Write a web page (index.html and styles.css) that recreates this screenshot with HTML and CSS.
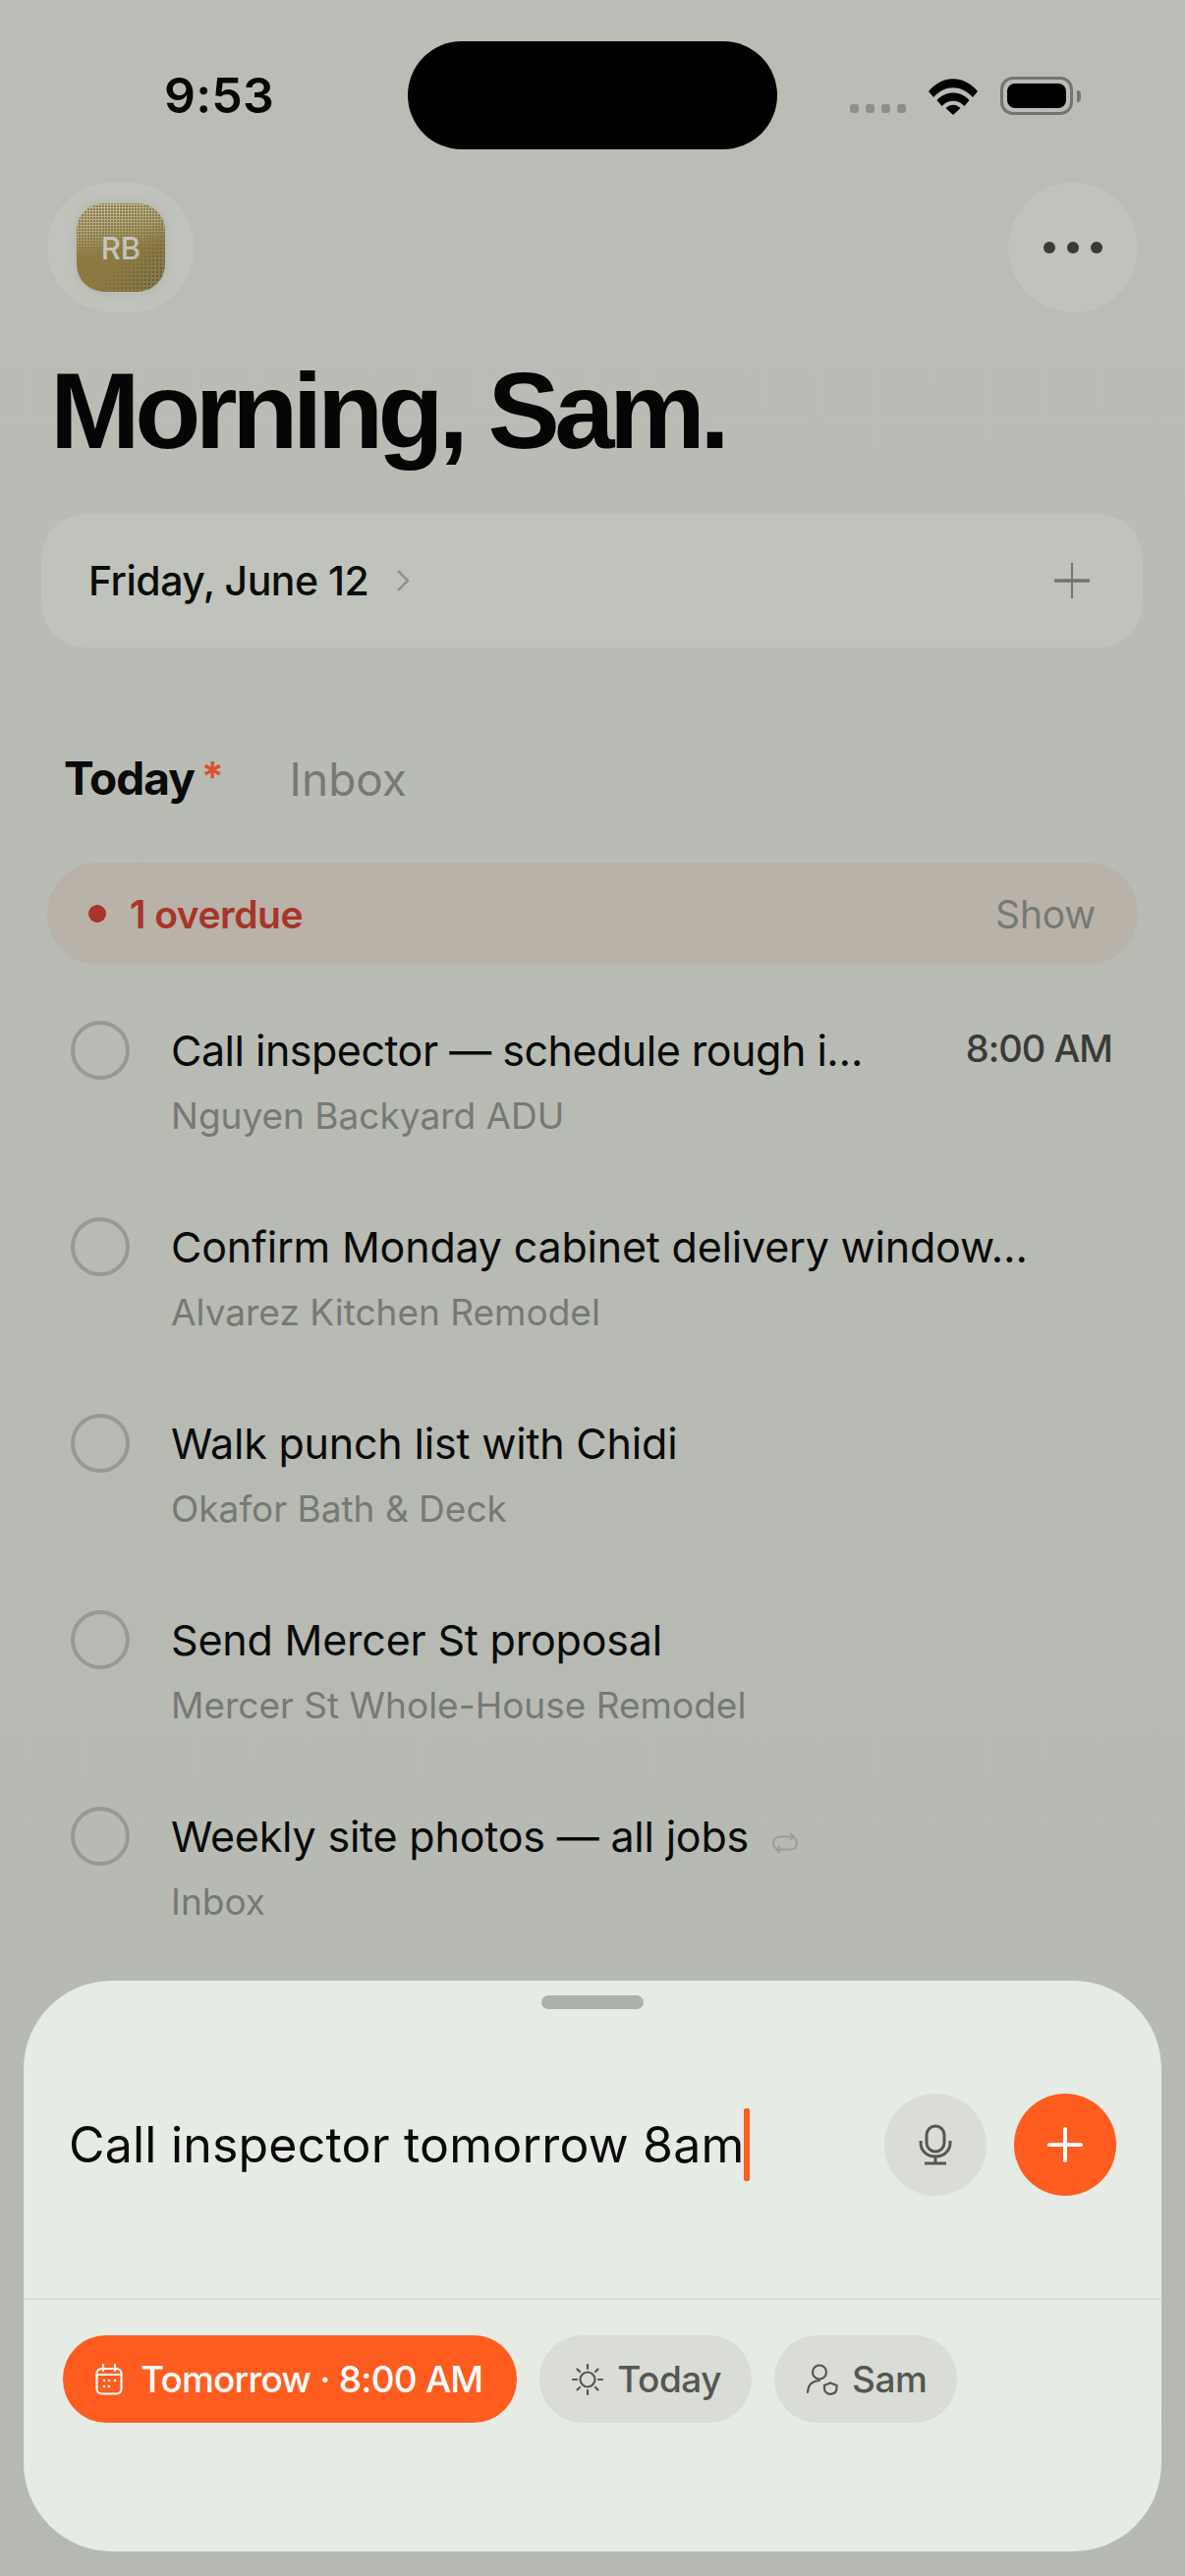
FILE: index.html
```html
<!DOCTYPE html>
<html lang="en">

<head>
    <meta charset="UTF-8">
    <title>Morning, Sam.</title>
    <link rel="stylesheet" href="styles.css">
</head>

<body>

    <header class="status">
        <span class="time">9:53</span>
        <div class="island"></div>
        <div class="status_icons">
            <div class="signal"><i></i><i></i><i></i><i></i></div>
            <svg class="wifi" viewBox="0 0 52 38" width="52" height="38">
                <path d="M1 14 C15 -3 37 -3 51 14 L46 20 C34 7 18 7 6 20 Z" />
                <path d="M9.500 23 C18 13 34 13 42.500 23 L37.500 29 C31 22 21 22 14.500 29 Z" />
                <path d="M18.500 31 C23 26.500 29 26.500 33.500 31 L26 38 Z" />
            </svg>
            <div class="battery"><div class="battery_fill"></div></div>
            <div class="battery_nub"></div>
        </div>
    </header>

    <section class="top">
        <div class="avatar_wrap">
            <div class="avatar"><span>RB</span></div>
        </div>
        <button class="more"><i></i><i></i><i></i></button>
    </section>

    <h1>Morning, Sam.</h1>

    <section class="date_card">
        <span class="date">Friday, June 12</span>
        <svg class="chevron" viewBox="0 0 14 24" width="14" height="24">
            <path d="M2 2 L12 12 L2 22" />
        </svg>
        <svg class="date_plus" viewBox="0 0 38 38" width="38" height="38">
            <path d="M19 1 V37" />
            <path class="thick" d="M1 19 H37" />
        </svg>
    </section>

    <nav class="tabs">
        <button class="tab valgt">Today<span class="star">*</span></button>
        <button class="tab">Inbox</button>
    </nav>

    <section class="overdue">
        <span class="dot"></span>
        <span class="overdue_text">1 overdue</span>
        <span class="show">Show</span>
    </section>

    <section class="liste">
        <article class="row">
            <span class="check"></span>
            <div class="info">
                <h2 class="tight">Call inspector — schedule rough i…</h2>
                <p>Nguyen Backyard ADU</p>
            </div>
            <span class="due">8:00 AM</span>
        </article>
        <article class="row">
            <span class="check"></span>
            <div class="info">
                <h2>Confirm Monday cabinet delivery window…</h2>
                <p>Alvarez Kitchen Remodel</p>
            </div>
        </article>
        <article class="row">
            <span class="check"></span>
            <div class="info">
                <h2>Walk punch list with Chidi</h2>
                <p>Okafor Bath &amp; Deck</p>
            </div>
        </article>
        <article class="row">
            <span class="check"></span>
            <div class="info">
                <h2>Send Mercer St proposal</h2>
                <p>Mercer St Whole-House Remodel</p>
            </div>
        </article>
        <article class="row">
            <span class="check"></span>
            <div class="info">
                <h2>Weekly site photos — all jobs
                    <svg class="repeat" viewBox="0 0 28 24" width="28" height="24">
                        <path d="M19 2 L23 5.500 L19 9" />
                        <path d="M22 5.500 H9 C4 5.500 2 8.500 2 12 C2 14 3 16 4.500 17" />
                        <path d="M9 22 L5 18.500 L9 15" />
                        <path d="M6 18.500 H19 C24 18.500 26 15.500 26 12 C26 10 25 8 23.500 7" />
                    </svg>
                </h2>
                <p>Inbox</p>
            </div>
        </article>
    </section>

    <section class="sheet">
        <div class="handle"></div>
        <div class="input_row">
            <div class="input_text">Call inspector tomorrow 8am<span class="cursor"></span></div>
            <button class="round mic">
                <svg viewBox="0 0 34 42" width="34" height="42">
                    <rect x="8" y="2" width="18" height="26" rx="9" />
                    <path d="M2 17 V19 C2 28 9 33 17 33 C25 33 32 28 32 19 V17" />
                    <path d="M17 33 V39" />
                    <path d="M6 40 H28" />
                </svg>
            </button>
            <button class="round add">
                <svg viewBox="0 0 36 36" width="36" height="36">
                    <path d="M18 2 V34" />
                    <path d="M2 18 H34" />
                </svg>
            </button>
        </div>
        <div class="chips">
            <button class="chip active">
                <svg viewBox="0 0 28 32" width="28" height="32">
                    <rect x="1.500" y="5" width="25" height="25.500" rx="5" />
                    <path d="M1.500 11 H26.500" />
                    <path d="M8 1 V7" />
                    <path d="M20 1 V7" />
                    <circle class="fill" cx="9" cy="17" r="1.300" />
                    <circle class="fill" cx="14" cy="17" r="1.300" />
                    <circle class="fill" cx="20" cy="17" r="1.300" />
                    <circle class="fill" cx="9" cy="23" r="1.300" />
                    <circle class="fill" cx="14" cy="23" r="1.300" />
                </svg>
                Tomorrow · 8:00 AM
            </button>
            <button class="chip">
                <svg viewBox="0 0 32 32" width="32" height="32">
                    <circle cx="16" cy="16" r="7.500" />
                    <path d="M16 1 V5" />
                    <path d="M16 27 V31" />
                    <path d="M1 16 H5" />
                    <path d="M27 16 H31" />
                    <path d="M5.500 5.500 L8 8" />
                    <path d="M24 24 L26.500 26.500" />
                    <path d="M5.500 26.500 L8 24" />
                    <path d="M24 8 L26.500 5.500" />
                </svg>
                Today
            </button>
            <button class="chip">
                <svg viewBox="0 0 32 32" width="32" height="32">
                    <circle cx="13" cy="8.500" r="7" />
                    <path d="M1 29 C1 22 5 17.500 13 17" />
                    <path d="M18 22 L24 19.500 L30.500 22 V25 C30.500 28 28 30.500 24 31 C20.500 30.500 18 28 18 25 Z" />
                </svg>
                Sam
            </button>
        </div>
    </section>

</body>

</html>
```

FILE: styles.css
```css
* {
    box-sizing: border-box;
}

html,
body {
    margin: 0;
    padding: 0;
}

body {
    width: 1206px;
    height: 2622px;
    overflow: hidden;
    background: linear-gradient(#babcb6, #b6b8b2);
    font-family: Inter, "Liberation Sans", sans-serif;
    color: #0a0a0a;
}

button {
    border: none;
    padding: 0;
    font-family: inherit;
    background: none;
}

/* status bar */
.status {
    display: flex;
    height: 186px;
    padding: 42px 0 0 167px;
}

.time {
    width: 110px;
    margin-top: 26px;
    font-size: 50px;
    line-height: 58px;
    font-weight: 600;
    letter-spacing: 0.2px;
    color: #050505;
}

.island {
    width: 376px;
    height: 110px;
    margin-left: 138px;
    border-radius: 55px;
    background: #000;
}

.status_icons {
    display: flex;
    height: 40px;
    margin: 36px 0 0 74px;
}

.signal {
    display: flex;
    gap: 7px;
    margin-top: 28px;
}

.signal i {
    width: 9px;
    height: 9px;
    border-radius: 3px;
    background: #8d8f89;
}

.wifi {
    margin: 1px 0 0 22px;
    fill: #000;
}

.battery {
    width: 74px;
    height: 39px;
    margin-left: 22px;
    padding: 4px;
    border: 3px solid #73756f;
    border-radius: 13px;
}

.battery_fill {
    width: 100%;
    height: 100%;
    border-radius: 8px;
    background: #000;
}

.battery_nub {
    width: 4px;
    height: 12px;
    margin: 14px 0 0 4px;
    border-radius: 0 6px 6px 0;
    background: #73756f;
}

/* avatar + menu */
.top {
    display: flex;
    justify-content: space-between;
    height: 132px;
    padding: 0 48px;
}

.avatar_wrap {
    display: flex;
    align-items: center;
    justify-content: center;
    width: 150px;
    height: 132px;
    border-radius: 66px;
    background: #c0c2bc;
}

.avatar {
    position: relative;
    overflow: hidden;
    display: flex;
    align-items: center;
    justify-content: center;
    width: 90px;
    height: 90px;
    border-radius: 28px;
    background: #8c7941;
    box-shadow: 0 0 10px rgba(170, 170, 160, 0.7);
    color: #c4c5bd;
    font-size: 31px;
    font-weight: 500;
}

.avatar span {
    position: relative;
}

/* dithered shine top left, dark speckle bottom right */
.avatar::before,
.avatar::after {
    content: "";
    position: absolute;
    inset: 0;
}

.avatar::before {
    background: radial-gradient(circle at 1.500px 1.500px, #c2bfa6 1px, transparent 1.200px) 0 0 / 3px 3px;
    -webkit-mask-image: linear-gradient(170deg, #000 0%, rgba(0, 0, 0, 0.7) 25%, transparent 55%);
    mask-image: linear-gradient(170deg, #000 0%, rgba(0, 0, 0, 0.7) 25%, transparent 55%);
}

.avatar::after {
    background: radial-gradient(circle at 2px 2px, #4f5358 1px, transparent 1.200px) 0 0 / 4px 4px;
    -webkit-mask-image: linear-gradient(315deg, #000 0%, rgba(0, 0, 0, 0.5) 25%, transparent 45%);
    mask-image: linear-gradient(315deg, #000 0%, rgba(0, 0, 0, 0.5) 25%, transparent 45%);
}

.more {
    display: flex;
    align-items: center;
    justify-content: center;
    gap: 12px;
    width: 132px;
    height: 132px;
    border-radius: 50%;
    background: #c0c2bc;
}

.more i {
    width: 12px;
    height: 12px;
    border-radius: 50%;
    background: #3a3b39;
}

h1 {
    margin: 36px 0 0 51px;
    font-family: "Liberation Sans", sans-serif;
    font-size: 110px;
    line-height: 128px;
    font-weight: 700;
    letter-spacing: -5.500px;
    color: #050505;
}

/* date */
.date_card {
    display: flex;
    align-items: center;
    height: 136px;
    margin: 41px 43px 0 42px;
    padding: 0 53px 0 48px;
    border-radius: 46px;
    background: #c0c3bc;
}

.date {
    font-size: 41px;
    font-weight: 500;
    letter-spacing: -0.5px;
    color: #0c0c0c;
}

.chevron {
    margin-left: 28px;
    fill: none;
    stroke: #8f918b;
    stroke-width: 2.500;
}

.date_plus {
    margin-left: auto;
    fill: none;
    stroke: #72746f;
    stroke-width: 2;
}

.date_plus .thick {
    stroke-width: 3.500;
}

/* tabs */
.tabs {
    display: flex;
    gap: 68px;
    margin: 105px 0 0 65px;
}

.tab {
    font-size: 46px;
    line-height: 56px;
    font-weight: 400;
    color: #777973;
}

.tab.valgt {
    font-weight: 700;
    letter-spacing: -1px;
    color: #0a0a0a;
}

.star {
    position: relative;
    top: -3px;
    margin-left: 7px;
    font-size: 42px;
    font-weight: 600;
    color: #d9532a;
}

/* overdue */
.overdue {
    display: flex;
    align-items: center;
    height: 104px;
    margin: 56px 48px 0;
    padding: 0 43px 0 42px;
    border-radius: 52px;
    background: #b9b2a9;
}

.dot {
    width: 18px;
    height: 18px;
    border-radius: 50%;
    background: #a8342a;
}

.overdue_text {
    margin-left: 24px;
    font-size: 39px;
    font-weight: 600;
    letter-spacing: -0.5px;
    color: #a8342a;
}

.show {
    margin-left: auto;
    font-size: 39px;
    letter-spacing: -0.2px;
    color: #777973;
}

/* tasks */
.liste {
    margin-top: 17px;
}

.row {
    display: flex;
    align-items: flex-start;
    height: 200px;
    padding: 40px 48px 0 72px;
}

.check {
    flex: none;
    width: 60px;
    height: 60px;
    border: 4px solid #979a91;
    border-radius: 50%;
}

.info {
    margin-left: 42px;
}

.row h2 {
    margin: 0;
    font-size: 43px;
    line-height: 60px;
    font-weight: 400;
    letter-spacing: -0.2px;
    color: #0a0a0a;
    white-space: nowrap;
}

.row h2.tight {
    letter-spacing: -0.5px;
}

.row p {
    margin: 14px 0 0;
    font-size: 37px;
    line-height: 46px;
    color: #777973;
    white-space: nowrap;
}

.due {
    margin-left: auto;
    padding-right: 26px;
    font-size: 38px;
    line-height: 56px;
    font-weight: 500;
    letter-spacing: -1px;
    color: #3a3b38;
}

.repeat {
    margin-left: 11px;
    vertical-align: -3px;
    fill: none;
    stroke: #9a9c95;
    stroke-width: 2;
}

/* bottom sheet */
.sheet {
    position: absolute;
    left: 24px;
    top: 2016px;
    width: 1158px;
    height: 581px;
    border-radius: 90px;
    background: #e6ebe5;
}

.handle {
    width: 104px;
    height: 14px;
    margin: 15px auto 0;
    border-radius: 7px;
    background: #aeb0ab;
}

.input_row {
    display: flex;
    align-items: center;
    height: 296px;
    padding: 0 46px 18px 46px;
    border-bottom: 2px solid #d8ddd7;
}

.input_text {
    display: flex;
    align-items: center;
    font-size: 50px;
    line-height: 74px;
    letter-spacing: 0.2px;
    color: #0a0a0a;
}

.cursor {
    flex: none;
    width: 6px;
    height: 74px;
    border-radius: 2px;
    background: #ff5c1f;
}

.round {
    display: flex;
    align-items: center;
    justify-content: center;
    flex: none;
    width: 104px;
    height: 104px;
    border-radius: 50%;
}

.mic {
    margin-left: auto;
    background: #d9dcd7;
}

.mic svg {
    fill: none;
    stroke: #555752;
    stroke-width: 3;
}

.add {
    margin-left: 28px;
    background: #ff5c1f;
}

.add svg {
    fill: none;
    stroke: #fff;
    stroke-width: 4;
    stroke-linecap: round;
}

.chips {
    display: flex;
    gap: 23px;
    padding: 36px 0 0 40px;
}

.chip {
    display: flex;
    align-items: center;
    gap: 14px;
    height: 89px;
    padding: 0 31px 0 33px;
    border-radius: 44px;
    background: #d9dcd7;
    font-size: 37px;
    font-weight: 500;
    letter-spacing: -0.5px;
    color: #555752;
}

.chip svg {
    fill: none;
    stroke: #555752;
    stroke-width: 2.200;
    stroke-linecap: round;
}

.chip.active {
    gap: 18px;
    padding-right: 35px;
    background: #ff5c1f;
    letter-spacing: -0.8px;
    color: #fff;
}

.chip.active svg {
    stroke: #fff;
}

.chip .fill {
    stroke: none;
    fill: #fff;
}
```
